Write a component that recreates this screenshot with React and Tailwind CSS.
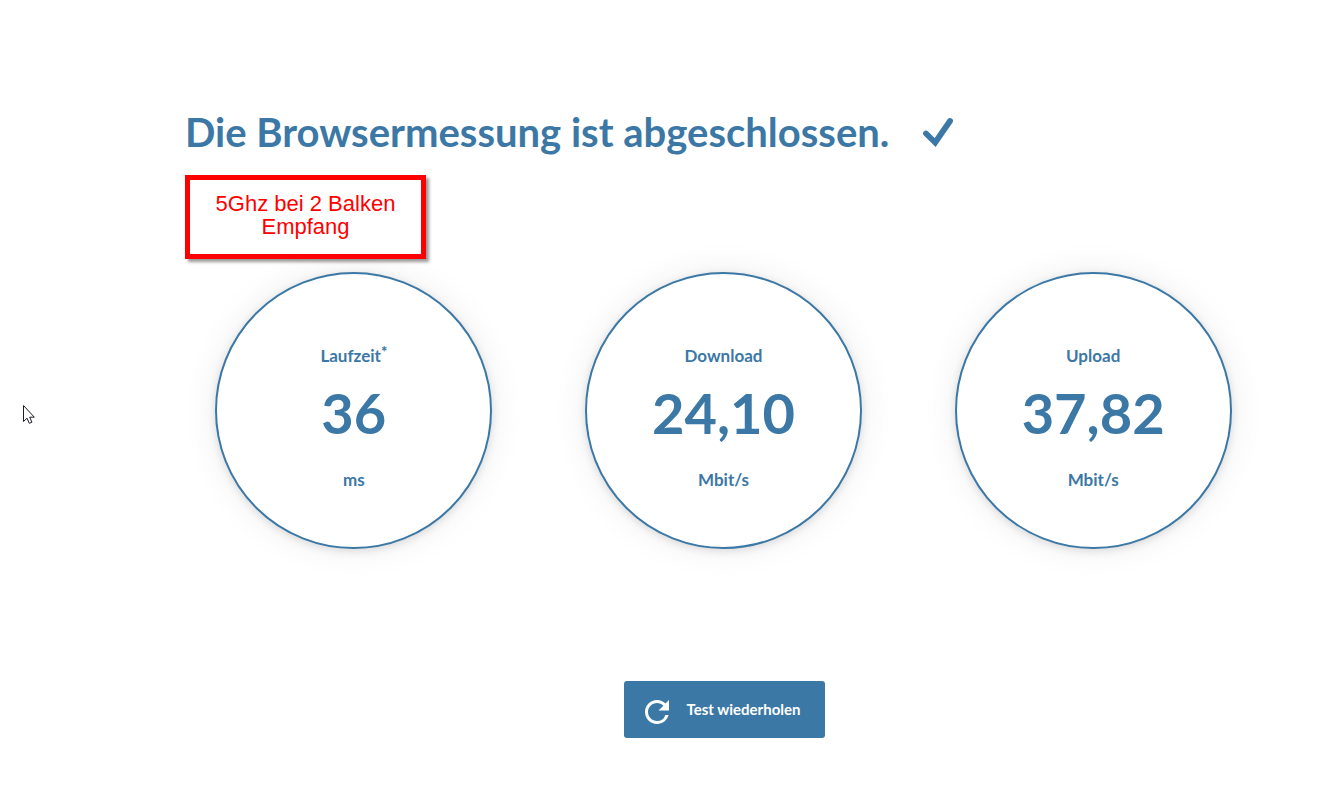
const results = [
    { label: "Laufzeit", value: "36", unit: "ms", footnote: true },
    { label: "Download", value: "24,10", unit: "Mbit/s" },
    { label: "Upload", value: "37,82", unit: "Mbit/s" },
];

const CheckIcon = () => (
    <svg className="w-8 h-8 shrink-0" viewBox="0 0 32 32" fill="none" aria-hidden="true">
        <path
            d="M5 17.500 14.200 26.500 29 5"
            stroke="currentColor"
            strokeWidth="5.800"
            strokeLinecap="round"
            strokeLinejoin="miter"
        />
    </svg>
);

const RefreshIcon = () => (
    <svg className="w-6 h-6 mt-1 shrink-0" viewBox="4 4 16 16" fill="currentColor" aria-hidden="true">
        <path d="M17.650 6.350A7.958 7.958 0 0 0 12 4c-4.420 0-7.990 3.580-7.990 8s3.570 8 7.990 8c3.730 0 6.840-2.550 7.730-6h-2.080A5.990 5.990 0 0 1 12 18c-3.310 0-6-2.690-6-6s2.690-6 6-6c1.660 0 3.140.690 4.220 1.780L13 11h7V4l-2.350 2.350z" />
    </svg>
);

const Pointer = () => (
    <svg className="absolute left-[23px] top-[404px] w-3 h-5" viewBox="0 0 12 20" aria-hidden="true">
        <path
            d="M.5 1.500V17.500L4 14.200 6.300 19.300 8.900 18.200 6.700 13.200H11.300Z"
            fill="#fff"
            stroke="#1c1c28"
            strokeWidth="1"
        />
    </svg>
);

const ResultCircle = ({ label, value, unit, footnote }) => (
    <div className="flex justify-center">
        <div className="w-[277px] h-[277px] rounded-full border-2 border-[#3c78a5] bg-white shadow-[0_0_36px_rgba(0,0,0,0.07),0_2px_8px_rgba(0,0,0,0.12)] flex flex-col items-center pt-[70px] font-bold">
            <h2 className="flex items-start text-[17px] leading-6">
                {label}
                {footnote && <sup className="top-0 text-[15px] leading-none font-black">*</sup>}
            </h2>
            <p className="mt-2 text-[56px] leading-[74px]">{value}</p>
            <p className="mt-[18px] text-[17px] leading-6">{unit}</p>
        </div>
    </div>
);

const App = () => {
    return (
        <main className="relative min-h-screen bg-white pl-[169px] pr-14 pt-26 pb-18 font-[Lato,sans-serif] text-[#3c78a5]">
            <div className="flex items-center gap-8 px-4">
                <h1 className="text-[40px] leading-14 font-bold">
                    Die Browsermessung ist abgeschlossen.
                </h1>
                <CheckIcon />
            </div>

            <div className="mt-[15px] mx-4 w-fit">
                <p className="relative w-[241px] h-[84px] border-[5px] border-[#ff0000] bg-white pt-3 text-center font-['Liberation_Sans',sans-serif] text-[22px] leading-[23px] text-[#ff0000] shadow-[3px_3px_3px_rgba(0,0,0,0.4)]">
                    5Ghz bei 2 Balken
                    <br />
                    Empfang
                </p>
            </div>

            <section className="mt-[13px] mr-px grid grid-cols-3">
                {results.map((result) => (
                    <ResultCircle key={result.label} {...result} />
                ))}
            </section>

            <div className="mt-33 flex justify-center">
                <button
                    type="button"
                    className="flex h-[57px] w-[201px] items-center gap-[18px] rounded-[3px] bg-[#3c78a5] pl-[21px] text-[15px] font-bold text-white cursor-pointer hover:bg-[#336a93]"
                >
                    <RefreshIcon />
                    <span>Test wiederholen</span>
                </button>
            </div>

            <Pointer />
        </main>
    );
};

export default App;
